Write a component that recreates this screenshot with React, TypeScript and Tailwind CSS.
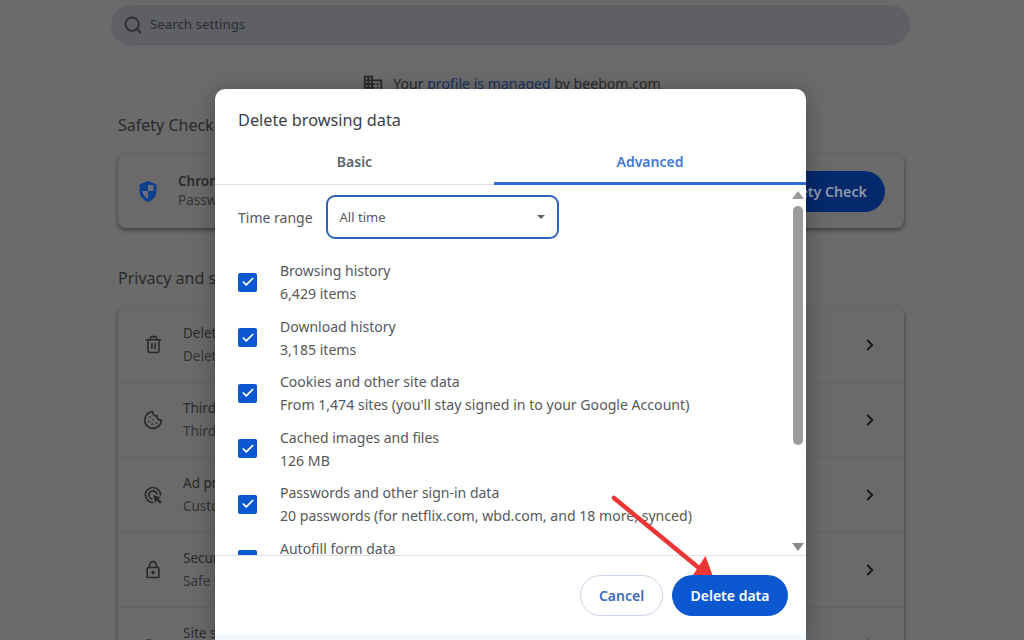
import React from 'react';
import { Search, Trash2, Cookie, ChevronRight, Check } from 'lucide-react';
import { MdAdsClick, MdDomain, MdLockOutline, MdOutlineVpnKey } from 'react-icons/md';

const privacyRows = [
  { icon: <Trash2 size={19} />, title: 'Delete browsing data', sub: 'Delete history, cookies, cache, and more' },
  { icon: <Cookie size={20} />, title: 'Third-party cookies', sub: 'Third-party cookies are blocked' },
  { icon: <MdAdsClick size={22} />, title: 'Ad privacy', sub: 'Customize the info used by sites' },
  { icon: <MdLockOutline size={24} />, title: 'Security', sub: 'Safe Browsing and other settings' },
  { icon: <MdOutlineVpnKey size={22} />, title: 'Site settings', sub: 'Controls what sites can use' },
];

const dataRows = [
  { title: 'Browsing history', sub: '6,429 items' },
  { title: 'Download history', sub: '3,185 items' },
  { title: 'Cookies and other site data', sub: "From 1,474 sites (you'll stay signed in to your Google Account)" },
  { title: 'Cached images and files', sub: '126 MB' },
  { title: 'Passwords and other sign-in data', sub: '20 passwords (for netflix.com, wbd.com, and 18 more, synced)' },
  { title: 'Autofill form data', sub: '' },
];

const App = () => {
  return (
    <div className="relative h-[640px] w-[1024px] overflow-hidden bg-[#6b6b6b] font-['Noto_Sans','Open_Sans',sans-serif] text-[#2a2a2b]">
      {/* Settings page behind the dialog */}
      <div className="flex flex-col pt-[5px]">
        <div className="ml-[111px] mr-[114px] flex h-10 items-center gap-[7px] rounded-full bg-[#5e6066] px-[12px] text-[13.3px] text-[#2c2d2f]">
          <Search size={20} strokeWidth={2.2} />
          <span>Search settings</span>
        </div>

        <div className="mt-[28px] flex h-[20px] items-center justify-center gap-[9px] pr-[1px] pt-[1px] text-[14.1px]">
          <MdDomain size={22} />
          <span>
            Your <span className="text-[#1c3160]">profile is managed</span> by beebom.com
          </span>
        </div>

        <h2 className="ml-[118px] mt-[21px] text-[16px] leading-[22px]">Safety Check</h2>

        <div className="ml-[118px] mt-[18px] flex h-[74px] w-[786px] items-center rounded-lg bg-[#6a6a6a] pl-5 pr-[19px] shadow-[0_2px_4px_rgba(0,0,0,0.45)]">
          <svg width="20" height="23" viewBox="0 0 20 23" className="shrink-0">
            <path d="M10 1 L18.5 4.5 V11 C18.5 16 15 20 10 22 C5 20 1.5 16 1.5 11 V4.5 Z" fill="#0f3f8c" />
            <path d="M10 4.5 V11 H15.5 V5.5 L10 4.5 Z M4.5 11 H10 V18.5 C7 17.5 4.5 14.5 4.5 11 Z" fill="#6a6f78" />
          </svg>
          <div className="ml-[20px] flex-1">
            <div className="text-[13.5px] font-semibold leading-[19px]">Chrome found some safety recommendations</div>
            <div className="text-[13.5px] leading-[19px] text-[#333436]">Passwords</div>
          </div>
          <div className="flex h-[41px] w-[170px] items-center justify-center rounded-full bg-[#04296d] pl-[4px] pt-[1px] text-[14.2px] font-semibold text-[#8f9aae]">
            Go to Safety Check
          </div>
        </div>

        <h2 className="ml-[118px] mt-[39px] text-[16px] leading-[22px]">Privacy and security</h2>

        <div className="ml-[118px] mt-[18px] w-[786px] rounded-lg bg-[#6a6a6a] shadow-[0_2px_4px_rgba(0,0,0,0.45)]">
          {privacyRows.map((row, i) => (
            <div key={row.title} className={`flex h-[75px] items-center pl-[25px] pr-[25px] ${i > 0 ? 'border-t border-[#636363]' : ''}`}>
              <span className="flex w-5 shrink-0 justify-center text-[#2a2a2b]">{row.icon}</span>
              <div className="ml-[20px] flex-1 text-[13.5px] leading-[23px]">
                <div>{row.title}</div>
                <div className="text-[#333436]">{row.sub}</div>
              </div>
              <ChevronRight size={18} strokeWidth={2.6} className="text-[#1a1a1a]" />
            </div>
          ))}
        </div>
      </div>

      {/* Dialog */}
      <div className="absolute left-[215px] top-[89px] flex h-[551px] w-[591px] flex-col rounded-t-[10px] bg-white shadow-[0_4px_24px_rgba(0,0,0,0.3)]">
        <div className="pl-[23px] pt-[19px] text-[16.3px] leading-[24px] text-[#3c4043]">Delete browsing data</div>

        <div className="mt-[15px] flex h-[38px] border-b border-[#dfe1e5] text-[14px] font-semibold">
          <div className="flex w-[279px] items-center justify-center pb-[8px] text-[#5f6368]">Basic</div>
          <div className="-mb-px flex flex-1 items-center justify-center border-b-[3px] border-[#2f6bd0] pb-[6px] text-[#3f78d4]">Advanced</div>
        </div>

        <div className="flex h-[371px] overflow-hidden border-b border-[#dfe1e5]">
          <div className="min-w-0 flex-1 pl-[23px]">
            <div className="mt-[10px] flex items-center gap-[13px]">
              <span className="pt-[1px] text-[14px] text-[#55585c]">Time range</span>
              <div className="flex h-[44px] w-[233px] items-center justify-between rounded-[9px] border-2 border-[#2f62b8] pl-[11px] pr-[12px] text-[13px] text-[#55585c]">
                <span className="pl-[1px] pt-[2px]">All time</span>
                <span className="h-0 w-0 border-x-[4px] border-t-[4px] border-x-transparent border-t-[#5f6368]" />
              </div>
            </div>
            <div className="mt-[15.5px]">
              {dataRows.map((row) => (
                <div key={row.title} className="flex h-[55.5px] items-center">
                  <span className="flex h-[19px] w-[19px] shrink-0 items-center justify-center rounded-[2px] bg-[#0b57d0] text-white">
                    <Check size={14} strokeWidth={3} />
                  </span>
                  <div className="ml-[23px] whitespace-nowrap text-[14px] leading-[23px] text-[#55585c]">
                    <div>{row.title}</div>
                    <div className="min-h-[23px] text-[14.1px]">{row.sub}</div>
                  </div>
                </div>
              ))}
            </div>
          </div>

          {/* Scrollbar */}
          <div className="flex w-[16px] shrink-0 flex-col items-center pt-[6px]">
            <span className="h-0 w-0 border-x-[6px] border-b-[8px] border-x-transparent border-b-[#9b9b9b]" />
            <span className="mt-[7px] h-[239px] w-[10px] rounded-full bg-[#9b9b9b]" />
            <span className="mt-[98px] h-0 w-0 border-x-[6px] border-t-[8px] border-x-transparent border-t-[#8a8a8a]" />
          </div>
        </div>

        <div className="flex flex-1 items-start justify-end gap-[9px] pr-[18px] pt-[19px] text-[14px] font-semibold">
          <div className="flex h-[41px] w-[83px] items-center justify-center rounded-full border border-[#c9d5e8] text-[#3a6bc0]">Cancel</div>
          <div className="flex h-[41px] w-[116px] items-center justify-center rounded-full bg-[#0b57d0] text-white">Delete data</div>
        </div>
        <div className="h-[5px] bg-[#f3f8fd]" />
      </div>

      <svg className="absolute left-[605px] top-[490px]" width="115" height="85" viewBox="0 0 115 85">
        <line x1="9" y1="8" x2="94" y2="78" stroke="#ee3535" strokeWidth="4.5" strokeLinecap="round" />
        <path d="M100.5 66 L107.5 85 L88 85 Z" fill="#ee3535" />
      </svg>
    </div>
  );
};

export default App;
